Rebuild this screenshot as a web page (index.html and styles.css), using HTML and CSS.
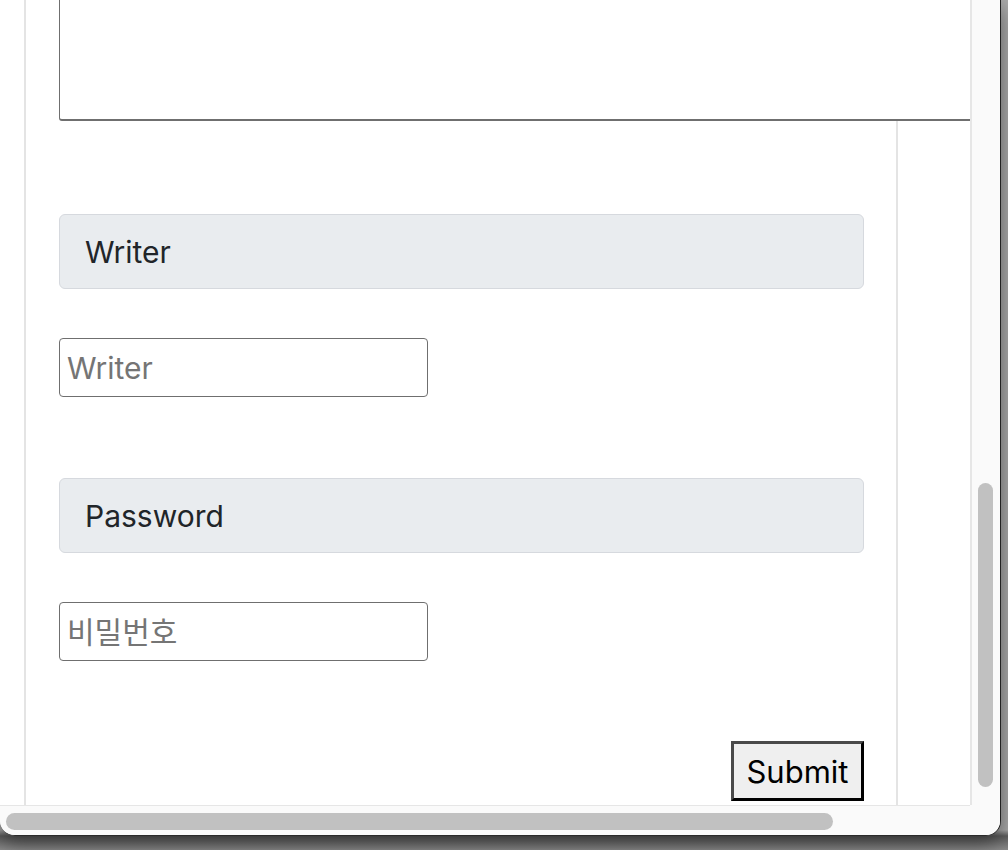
FILE: index.html
```html
<!DOCTYPE html>
<html lang="ko">
<head>
<meta charset="utf-8">
<title>Form</title>
<link rel="stylesheet" href="styles.css">
</head>
<body>
<div class="window">
  <div class="viewport">
    <div class="container">
      <textarea class="content-area" aria-label="Content"></textarea>
      <div class="field-head field-head-first">Writer</div>
      <input class="field-input" type="text" placeholder="Writer">
      <div class="field-head field-head-next">Password</div>
      <input class="field-input" type="password" placeholder="비밀번호">
      <div class="actions">
        <button class="submit" type="submit">Submit</button>
      </div>
    </div>
  </div>
  <div class="vscroll"><div class="vthumb"></div></div>
  <div class="hscroll"><div class="hthumb"></div></div>
  <div class="corner"></div>
</div>
</body>
</html>
```
FILE: styles.css
```css
html, body {
  margin: 0;
  padding: 0;
}
body {
  width: 1008px;
  height: 850px;
  overflow: hidden;
  background: linear-gradient(to bottom, #a9a9a9 0, #a9a9a9 830px, #5e5e5e 836px, #8a8a8a 850px);
  font-family: Inter, "Noto Sans CJK KR", sans-serif;
}
.window {
  width: 1000px;
  height: 835px;
  display: grid;
  grid-template-columns: 970px 30px;
  grid-template-rows: 805px 30px;
  background: #fafafa;
  border-right: 1px solid #222;
  border-bottom: 1px solid #2a2a2a;
  border-bottom-left-radius: 15px;
  border-bottom-right-radius: 15px;
  overflow: hidden;
  box-shadow: 0 8px 20px rgba(0,0,0,0.45);
}
.viewport {
  background: #fff;
  overflow: hidden;
  position: relative;
}
.container {
  box-sizing: border-box;
  margin-left: 24px;
  width: 874px;
  height: 805px;
  border-left: 2px solid #e4e4e4;
  border-right: 2px solid #e4e4e4;
  padding: 0 32px 0 33px;
  display: flex;
  flex-direction: column;
}
.content-area {
  display: block;
  box-sizing: border-box;
  flex: none;
  width: 1000px;
  height: 221px;
  margin: -100px 0 0 0;
  border: 1px solid #6f6f6f;
  border-bottom-width: 2px;
  border-radius: 3px;
  background: #fff;
  resize: none;
  padding: 0;
}
.field-head {
  box-sizing: border-box;
  flex: none;
  height: 75px;
  background: #e9ecef;
  border: 1px solid #d6d9de;
  border-radius: 6px;
  padding-left: 25px;
  display: flex;
  align-items: center;
  font-size: 30px;
  color: #212529;
}
.field-head-first { margin-top: 93px; }
.field-head-next { margin-top: 81px; }
.field-input {
  box-sizing: border-box;
  flex: none;
  width: 369px;
  height: 59px;
  margin-top: 49px;
  border: 1px solid #6f6f6f;
  border-radius: 4px;
  padding: 0 7px;
  font-family: Inter, "Noto Sans CJK KR", sans-serif;
  font-size: 30px;
  color: #000;
  background: #fff;
}
.field-input::placeholder {
  color: #757575;
}
.actions {
  display: flex;
  justify-content: flex-end;
  margin-top: 80px;
}
.submit {
  box-sizing: border-box;
  width: 133px;
  height: 60px;
  border-style: solid;
  border-width: 3px;
  border-color: #4a4a4a #000 #000 #4a4a4a;
  background: #efefef;
  font-family: Inter, sans-serif;
  font-size: 31px;
  color: #000;
  padding: 0;
}
.vscroll {
  box-sizing: border-box;
  border-left: 2px solid #e6e6e6;
  background: #fafafa;
  padding: 483px 0 0 6px;
}
.vthumb {
  width: 15px;
  height: 304px;
  border-radius: 8px;
  background: #c1c1c1;
}
.hscroll {
  box-sizing: border-box;
  border-top: 1px solid #e6e6e6;
  background: #fafafa;
  padding: 7px 0 0 6px;
}
.hthumb {
  width: 827px;
  height: 17px;
  border-radius: 9px;
  background: #c1c1c1;
}
.corner {
  background: #fafafa;
}
```
